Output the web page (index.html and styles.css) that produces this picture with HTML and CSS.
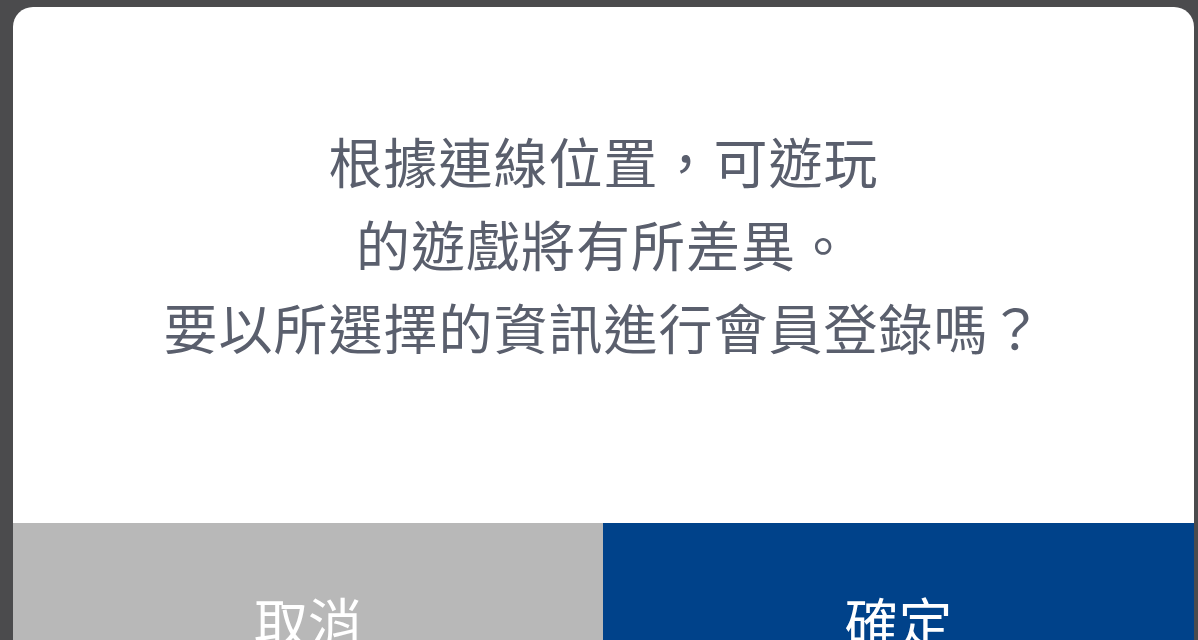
FILE: index.html
```html
<!DOCTYPE html>
<html lang="zh-Hant">
<head>
<meta charset="utf-8">
<title>會員登錄</title>
<link rel="stylesheet" href="styles.css">
</head>
<body>
<div class="backdrop">
  <div class="dialog">
    <div class="message">
      <p class="line">根據連線位置，可遊玩</p>
      <p class="line">的遊戲將有所差異。</p>
      <p class="line">要以所選擇的資訊進行會員登錄嗎？</p>
    </div>
    <div class="actions">
      <button class="btn btn-cancel">取消</button>
      <button class="btn btn-confirm">確定</button>
    </div>
  </div>
</div>
</body>
</html>
```
FILE: styles.css
```css
html, body {
  margin: 0;
  padding: 0;
  height: 100%;
  overflow: hidden;
}
body {
  background: #4b4b4d;
  font-family: "Noto Sans CJK TC", "Noto Sans", sans-serif;
}
.backdrop {
  padding: 7px 4px 0 13px;
}
.dialog {
  background: #ffffff;
  border-radius: 20px 20px 0 0;
  overflow: hidden;
  display: flex;
  flex-direction: column;
}
.message {
  padding: 112px 0 155px;
  text-align: center;
  color: #5a5f6d;
}
.line {
  margin: 0;
  font-size: 54px;
  line-height: 83px;
  letter-spacing: 1px;
}
.actions {
  display: grid;
  grid-template-columns: 590px 1fr;
}
.btn {
  border: 0;
  margin: 0;
  height: 194px;
  font-family: inherit;
  font-size: 54px;
  color: #ffffff;
  padding: 0;
}
.btn-cancel {
  background: #b8b8b8;
}
.btn-confirm {
  background: #00428a;
}
```
